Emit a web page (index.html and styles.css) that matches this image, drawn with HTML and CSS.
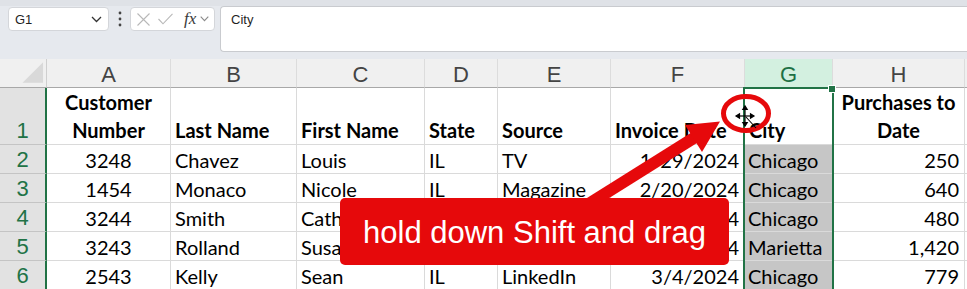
FILE: index.html
```html
<!DOCTYPE html>
<html>
<head>
<meta charset="utf-8">
<link rel="stylesheet" href="styles.css">
</head>
<body>
<div class="app">
  <div class="topbar">
    <div class="namebox"><span>G1</span>
      <svg class="chev" width="11" height="7" viewBox="0 0 11 7"><path d="M1 1 L5.5 5.5 L10 1" fill="none" stroke="#333" stroke-width="1.3"/></svg>
    </div>
    <div class="dots">
      <svg width="4" height="16" viewBox="0 0 4 16"><circle cx="2" cy="2" r="1.4" fill="#444"/><circle cx="2" cy="8" r="1.4" fill="#444"/><circle cx="2" cy="14" r="1.4" fill="#444"/></svg>
    </div>
    <div class="fxbox">
      <svg width="13" height="13" viewBox="0 0 13 13"><path d="M0.5 0.5 L12.5 12.5 M12.5 0.5 L0.5 12.5" stroke="#b8b8b8" stroke-width="1.1"/></svg>
      <svg class="check" width="15" height="12" viewBox="0 0 15 12"><path d="M0.5 6 L5 10.8 L14.5 0.8" fill="none" stroke="#b8b8b8" stroke-width="1.1"/></svg>
      <span class="fx">fx</span>
      <svg class="chev2" width="9" height="6" viewBox="0 0 9 6"><path d="M0.7 0.7 L4.5 4.7 L8.3 0.7" fill="none" stroke="#8a8a8a" stroke-width="1.1"/></svg>
    </div>
    <div class="formula">City</div>
  </div>

  <div class="sheet">
    <div class="corner"><svg width="47" height="28" viewBox="0 0 47 28"><path d="M23 24 L44 3 L44 24 Z" fill="#d9d9d9"/></svg></div>
    <div class="ch">A</div>
    <div class="ch">B</div>
    <div class="ch">C</div>
    <div class="ch">D</div>
    <div class="ch">E</div>
    <div class="ch">F</div>
    <div class="ch sel">G</div>
    <div class="ch">H</div>
    <div class="ch end"></div>

    <div class="rh">1</div>
    <div class="hd c">Customer<br>Number</div>
    <div class="hd">Last Name</div>
    <div class="hd">First Name</div>
    <div class="hd">State</div>
    <div class="hd">Source</div>
    <div class="hd">Invoice Date</div>
    <div class="hd">City</div>
    <div class="hd c">Purchases to<br>Date</div>
    <div class="end"></div>

    <div class="rh">2</div>
    <div class="c">3248</div>
    <div>Chavez</div>
    <div>Louis</div>
    <div>IL</div>
    <div>TV</div>
    <div class="r">1/29/2024</div>
    <div class="g">Chicago</div>
    <div class="r">250</div>
    <div class="end"></div>

    <div class="rh">3</div>
    <div class="c">1454</div>
    <div>Monaco</div>
    <div>Nicole</div>
    <div>IL</div>
    <div>Magazine</div>
    <div class="r">2/20/2024</div>
    <div class="g">Chicago</div>
    <div class="r">640</div>
    <div class="end"></div>

    <div class="rh">4</div>
    <div class="c">3244</div>
    <div>Smith</div>
    <div>Catherine</div>
    <div>IL</div>
    <div>Website</div>
    <div class="r">2/24/2024</div>
    <div class="g">Chicago</div>
    <div class="r">480</div>
    <div class="end"></div>

    <div class="rh">5</div>
    <div class="c">3243</div>
    <div>Rolland</div>
    <div>Susan</div>
    <div>GA</div>
    <div>TV</div>
    <div class="r">2/28/2024</div>
    <div class="g">Marietta</div>
    <div class="r">1,420</div>
    <div class="end"></div>

    <div class="rh">6</div>
    <div class="c">2543</div>
    <div>Kelly</div>
    <div>Sean</div>
    <div>IL</div>
    <div>LinkedIn</div>
    <div class="r">3/4/2024</div>
    <div class="g">Chicago</div>
    <div class="r">779</div>
    <div class="end"></div>
  </div>

  <div class="selbox"><span class="handle"></span></div>

  <svg class="overlay" width="967" height="289" viewBox="0 0 967 289">
    <line x1="571" y1="215" x2="697" y2="136" stroke="#e6090b" stroke-width="12"/>
    <polygon points="720,121.5 702,152 685,125" fill="#e6090b"/>
    <ellipse cx="746" cy="113.5" rx="22.5" ry="17" fill="none" stroke="#e6090b" stroke-width="5"/>
    <g stroke="#000" stroke-width="1.2" fill="#000">
      <line x1="738" y1="116" x2="752" y2="116"/>
      <line x1="745" y1="108" x2="745" y2="124"/>
      <path d="M736 116 L739.5 113.8 L739.5 118.2 Z"/>
      <path d="M754 116 L750.5 113.8 L750.5 118.2 Z"/>
      <path d="M745 106 L742.8 109.5 L747.2 109.5 Z"/>
      <path d="M745 126 L742.8 122.5 L747.2 122.5 Z"/>
    </g>
    <path d="M746 117 L756 128" stroke="#000" stroke-width="1.1"/>
  </svg>

  <div class="callout">hold down Shift and drag</div>
</div>
</body>
</html>
```
FILE: styles.css
```css
html, body {
  margin: 0;
  padding: 0;
  background: #fff;
}

.app {
  position: relative;
  width: 967px;
  height: 289px;
  overflow: hidden;
  font-family: Lato, "Liberation Sans", sans-serif;
}

/* formula bar */
.topbar {
  height: 59px;
  box-sizing: border-box;
  background: linear-gradient(#dfe2e7 0, #dfe2e7 6px, #e6e9ee 6px);
  display: flex;
  align-items: flex-start;
  padding: 7px 0 0 8px;
}

.namebox {
  width: 101px;
  height: 24px;
  box-sizing: border-box;
  background: #fff;
  border: 1px solid #d4d6da;
  border-radius: 4px;
  display: flex;
  align-items: center;
  justify-content: space-between;
  padding: 0 6px 0 6px;
  font: 13px "Liberation Sans", Arial, sans-serif;
  color: #1f1f1f;
}

.dots {
  width: 21px;
  height: 24px;
  display: flex;
  align-items: center;
  justify-content: center;
}

.fxbox {
  width: 85px;
  height: 24px;
  box-sizing: border-box;
  background: #fff;
  border: 1px solid #d4d6da;
  border-radius: 4px;
  display: flex;
  align-items: center;
  padding: 0 0 0 6px;
}

.check {
  margin-left: 8px;
}

.fx {
  margin-left: 11px;
  font: italic 17px "Liberation Serif", serif;
  color: #3a3a3a;
  line-height: 20px;
}

.chev2 {
  margin-left: 4px;
}

.formula {
  flex: 1;
  margin: -1px 0 0 5px;
  height: 46px;
  box-sizing: border-box;
  background: #fff;
  border: 1px solid #c9cbcf;
  border-right: none;
  border-radius: 4px 0 0 4px;
  padding: 5px 10px;
  font: 13px "Liberation Sans", Arial, sans-serif;
  color: #1f1f1f;
}

/* grid */
.sheet {
  display: grid;
  grid-template-columns: 47px 124px 126px 128px 73px 113px 134px 88px 132px 2px;
  grid-template-rows: 29px 57px repeat(5, 29px);
}

.sheet > div {
  box-sizing: border-box;
  border-right: 1px solid #dadada;
  border-bottom: 1px solid #dadada;
  display: flex;
  align-items: flex-end;
  padding: 0 4px 1px;
  font: 20px/24px Lato, "Liberation Sans", sans-serif;
  color: #000;
  white-space: nowrap;
  overflow: hidden;
}

.sheet > .corner {
  background: #f0f0f0;
  padding: 0;
  border-right-color: #cfcfcf;
  border-bottom-color: #a8a8a8;
  align-items: flex-start;
}

.sheet > .ch {
  background: #f0f0f0;
  border-right-color: #dcdcdc;
  border-bottom-color: #a8a8a8;
  justify-content: center;
  align-items: center;
  padding: 3px 0 0;
  font: 22px/24px "Liberation Sans", Arial, sans-serif;
  color: #444;
}

.sheet > .ch.sel {
  background: #d3f0e0;
  color: #1e7145;
}

.sheet > .ch.end {
  border-right: none;
}

.sheet > .end {
  border-right: none;
}

.sheet > .rh {
  background: #e2e2e2;
  border-right: 2px solid #217346;
  border-bottom-color: #c4c4c4;
  justify-content: center;
  padding: 0 0 1px;
  font: 22px/24px "Liberation Sans", Arial, sans-serif;
  color: #217346;
}

.sheet > .hd {
  font-weight: 700;
  line-height: 28px;
  padding-bottom: 0;
  white-space: nowrap;
}

.sheet > .c {
  justify-content: center;
  text-align: center;
}

.sheet > .r {
  justify-content: flex-end;
  padding-right: 5px;
}

.sheet > .g {
  background: #c6c6c6;
  padding-left: 3px;
}

/* overlays */
.selbox {
  position: absolute;
  left: 743px;
  top: 87px;
  width: 91px;
  height: 210px;
  box-sizing: border-box;
  border: 2px solid #217346;
}

.handle {
  position: absolute;
  right: -4px;
  top: -4px;
  width: 6px;
  height: 6px;
  background: #217346;
  border: 1px solid #fff;
}

.overlay {
  position: absolute;
  left: 0;
  top: 0;
}

.callout {
  position: absolute;
  left: 340px;
  top: 198px;
  width: 389px;
  height: 67px;
  box-sizing: border-box;
  background: #e6090b;
  border-radius: 5px;
  color: #fff;
  font: 31px "Liberation Sans", Arial, sans-serif;
  display: flex;
  align-items: center;
  justify-content: center;
  padding-top: 2px;
}
```
